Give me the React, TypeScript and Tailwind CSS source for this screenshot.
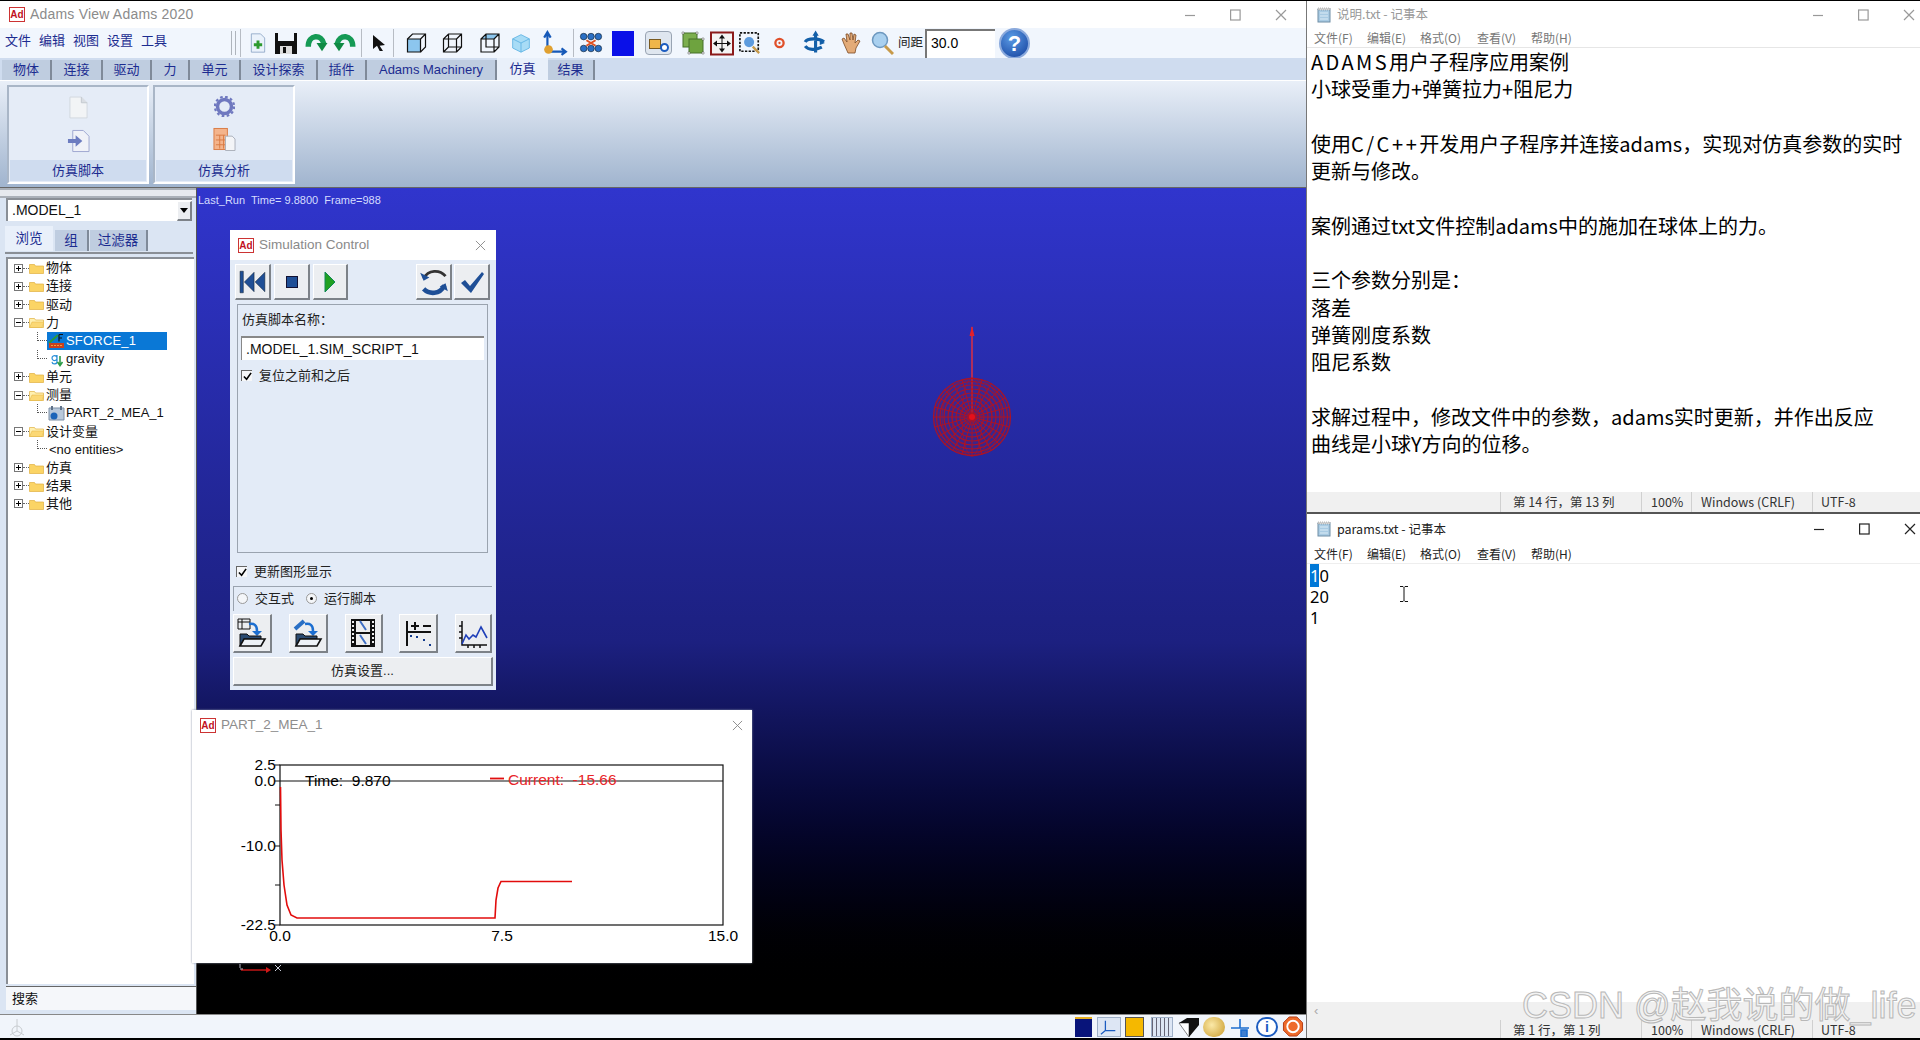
import type { ReactNode } from 'react'

const UI = "font-['Liberation_Sans','Noto_Sans_CJK_SC',sans-serif]"
const PAD = "font-['Noto_Sans_CJK_SC','Noto_Sans',sans-serif]"
const BEVEL = 'border-t border-l border-t-white border-l-white border-r-2 border-b-2 border-r-[#7d8288] border-b-[#7d8288] bg-[#eceef1] flex items-center justify-center'

const tabs = [
  { label: '物体', w: 'w-[50px]' },
  { label: '连接', w: 'w-[51px]' },
  { label: '驱动', w: 'w-[49px]' },
  { label: '力', w: 'w-[38px]' },
  { label: '单元', w: 'w-[51px]' },
  { label: '设计探索', w: 'w-[77px]' },
  { label: '插件', w: 'w-[49px]' },
  { label: 'Adams Machinery', w: 'w-[130px]' },
  { label: '仿真', w: 'w-[51px]', active: true },
  { label: '结果', w: 'w-[47px]' },
]

const tree = [
  { label: '物体', kind: 'plus' },
  { label: '连接', kind: 'plus' },
  { label: '驱动', kind: 'plus' },
  { label: '力', kind: 'minus' },
  { label: 'SFORCE_1', kind: 'force' },
  { label: 'gravity', kind: 'gravity' },
  { label: '单元', kind: 'plus' },
  { label: '测量', kind: 'minus' },
  { label: 'PART_2_MEA_1', kind: 'measure' },
  { label: '设计变量', kind: 'minus' },
  { label: '<no entities>', kind: 'none' },
  { label: '仿真', kind: 'plus' },
  { label: '结果', kind: 'plus' },
  { label: '其他', kind: 'plus' },
]

const notes: ReactNode[] = [
  <><span className="tracking-[2.4px]">ADAMS</span>用户子程序应用案例</>,
  '小球受重力+弹簧拉力+阻尼力',
  '',
  <>使用<span className="tracking-[2.6px]">C/C++</span>开发用户子程序并连接adams，实现对仿真参数的实时</>,
  '更新与修改。',
  '',
  '案例通过txt文件控制adams中的施加在球体上的力。',
  '',
  '三个参数分别是：',
  '落差',
  '弹簧刚度系数',
  '阻尼系数',
  '',
  '求解过程中，修改文件中的参数，adams实时更新，并作出反应',
  '曲线是小球Y方向的位移。',
]

function Ico({ className, children }: { className: string; children: ReactNode }) {
  return (
    <svg viewBox="0 0 24 24" className={`shrink-0 ${className}`}>
      {children}
    </svg>
  )
}

function AdLogo() {
  return (
    <span className="shrink-0 w-[16px] h-[15px] border border-[#c33] bg-white text-[#c1121f] text-[10px] leading-[13px] font-bold text-center">Ad</span>
  )
}

function WinControls({ dark }: { dark?: boolean }) {
  const c = dark ? '#222' : '#999'
  return (
    <svg viewBox="0 0 104 12" className="w-[104px] h-[12px]" fill="none" stroke={c} strokeWidth="1.2">
      <path d="M0 6.5h10" />
      <rect x="45.6" y="1" width="9.5" height="10" />
      <path d="M91 1l10 10M101 1L91 11" />
    </svg>
  )
}

function NoteIcon() {
  return (
    <svg viewBox="0 0 16 16" className="w-[16px] h-[16px] shrink-0">
      <rect x="2" y="2" width="12" height="13" fill="#a9cbe3" stroke="#6f8ea6" />
      <rect x="2" y="1" width="12" height="2" fill="#d8d8d8" stroke="#777" strokeWidth="0.5" strokeDasharray="1 1" />
      <path d="M4 6h8M4 9h8M4 12h8" stroke="#dcecf6" />
    </svg>
  )
}

function Folder({ open }: { open?: boolean }) {
  return (
    <svg viewBox="0 0 15 12" className="w-[15px] h-[12px] shrink-0">
      <path d="M0.5 2.5h5l1 1.5h8v7.5h-14z" fill={open ? '#fff0b0' : '#fbd465'} stroke="#e0b040" strokeWidth="0.7" />
      {open && <path d="M3 6h12l-2 5.5H0.5z" fill="#fbd875" stroke="#e0b040" strokeWidth="0.5" />}
    </svg>
  )
}

function TreeRow({ label, kind }: { label: string; kind: string }) {
  if (kind === 'plus' || kind === 'minus') {
    return (
      <div className="relative flex items-center h-[18.15px] pl-[6px] text-[13px] text-[#111]">
        <span className="relative w-[9px] h-[9px] border border-[#777] bg-white shrink-0">
          <span className="absolute left-[1px] top-[3px] w-[5px] h-px bg-black" />
          {kind === 'plus' && <span className="absolute left-[3px] top-[1px] w-px h-[5px] bg-black" />}
        </span>
        <span className="w-[6px] border-t border-dotted border-[#666]" />
        <Folder open={kind === 'minus'} />
        <span className="ml-[2px]">{label}</span>
      </div>
    )
  }
  return (
    <div className="flex items-center h-[18.15px] pl-[29px] text-[13px] text-[#111]">
      <span className="w-[10px] h-[9px] mb-[9px] border-l border-b border-dotted border-[#555] shrink-0" />
      {kind === 'force' && (
        <div className="flex items-center w-[120px] h-[18px] bg-[#0a78d6] text-white">
          <svg viewBox="0 0 17 16" className="w-[17px] h-[16px] shrink-0 ml-px">
            <path d="M1 10L10 2" stroke="#2a9a3c" strokeWidth="2" />
            <rect x="1" y="10" width="15" height="5" fill="#c9401e" />
            <path d="M3 12.5h11" stroke="#f2a23a" strokeDasharray="2 1" />
            <path d="M11 1.5h4M11 1.5v7M11 5h3" stroke="#111" strokeWidth="1.2" fill="none" />
          </svg>
          <span className="ml-px tracking-[0.2px]">{label}</span>
        </div>
      )}
      {kind === 'gravity' && (
        <>
          <svg viewBox="0 0 17 16" className="w-[17px] h-[16px] shrink-0 ml-px">
            <path d="M9 7a2.5 2.5 0 1 0 0 .1M9 4v6a2.5 2.5 0 0 1-5 .8" stroke="#2a8fd8" strokeWidth="1.2" fill="none" />
            <path d="M12 5v9M9.5 11l2.5 3.5 2.5-3.5" stroke="#2d9c48" strokeWidth="1.6" fill="none" />
          </svg>
          <span className="ml-px">{label}</span>
        </>
      )}
      {kind === 'measure' && (
        <>
          <svg viewBox="0 0 17 16" className="w-[17px] h-[16px] shrink-0 ml-px">
            <path d="M1 3h15v12H1z" fill="#b8c8da" stroke="#7c8fa6" />
            <path d="M4 1v4M13 1v4" stroke="#5e7188" strokeWidth="2" />
            <circle cx="6" cy="11" r="3.5" fill="#1c64b8" />
          </svg>
          <span className="ml-px">{label}</span>
        </>
      )}
      {kind === 'none' && <span className="ml-[2px]">{label}</span>}
    </div>
  )
}

function Toolbar() {
  return (
    <div className="flex items-center h-[30px] bg-[#f1f6fd] shrink-0">
      <div className="flex gap-[8px] pl-[5px] pb-[4px] text-[13px] text-[#1c2c90]">
        {['文件', '编辑', '视图', '设置', '工具'].map((m) => (
          <span key={m} className="w-[26px]">{m}</span>
        ))}
      </div>
      <span className="ml-[64px] w-[5px] h-[24px] border-x border-[#aeb4bc]" />
      <span className="ml-[4px] w-px h-[28px] bg-[#b7bcc4]" />
      <Ico className="ml-[7px] w-[20px] h-[24px]">
        <path d="M4 1h11l5 5v17H4z" fill="#eaf2fb" stroke="#8aa4c4" />
        <path d="M12 9v10M7 14h10" stroke="#2c9a2e" strokeWidth="3.5" />
      </Ico>
      <Ico className="ml-[6px] w-[24px] h-[24px]">
        <path d="M1 2h3v8h16V2h3v21H1z" fill="#111" />
        <rect x="6" y="15" width="12" height="8" fill="#ddd" />
        <rect x="9" y="16" width="3" height="6" fill="#111" />
      </Ico>
      <Ico className="ml-[6px] w-[25px] h-[22px]">
        <path d="M3 16C3 2 18 2 20 13" fill="none" stroke="#159a55" strokeWidth="6" />
        <path d="M12 12h12l-6 9z" fill="#0f8a44" />
      </Ico>
      <Ico className="ml-[3px] w-[25px] h-[22px]">
        <path d="M21 16C21 2 6 2 4 13" fill="none" stroke="#159a55" strokeWidth="6" />
        <path d="M0 12h12l-6 9z" fill="#0f8a44" />
      </Ico>
      <span className="ml-[4px] w-px h-[28px] bg-[#b7bcc4]" />
      <Ico className="ml-[9px] w-[16px] h-[26px]">
        <path d="M3 0l18 15-8 1 5 8-5 0-4-8-6 5z" fill="#111" />
      </Ico>
      <span className="ml-[6px] w-px h-[28px] bg-[#b7bcc4]" />
      <Ico className="ml-[11px] w-[25px] h-[24px]">
        <path d="M2 8h13v13H2z" fill="#8cc6ee" stroke="#111" strokeWidth="1.2" />
        <path d="M2 8l5-5h13v13l-5 5M15 8l5-5" fill="none" stroke="#111" strokeWidth="1.2" />
      </Ico>
      <Ico className="ml-[11px] w-[25px] h-[24px]">
        <path d="M2 8h13v13H2zM2 8l5-5h13v13l-5 5M15 8l5-5M7 3v13h13M7 16l-5 5" fill="none" stroke="#111" strokeWidth="1.2" />
      </Ico>
      <Ico className="ml-[13px] w-[24px] h-[24px]">
        <path d="M2 8l5-5h13l-5 5z" fill="#8cc6ee" />
        <path d="M2 8h13v13H2zM2 8l5-5h13v13l-5 5M15 8l5-5M7 3v13h13" fill="none" stroke="#111" strokeWidth="1.2" />
      </Ico>
      <Ico className="ml-[8px] w-[20px] h-[24px]">
        <path d="M12 2l10 5v11l-10 5-10-5V7z" fill="#a8dcf6" stroke="#5bb1e2" />
        <path d="M2 7l10 5 10-5M12 12v11" fill="none" stroke="#5bb1e2" />
      </Ico>
      <Ico className="ml-[11px] w-[26px] h-[28px]">
        <path d="M5 18V3M2 7l3-5 3 5M5 20h17M18 17l4 3-4 3" fill="none" stroke="#1659b8" strokeWidth="2" />
        <circle cx="6" cy="18" r="4" fill="#e0a030" />
      </Ico>
      <span className="ml-[5px] w-px h-[28px] bg-[#b7bcc4]" />
      <Ico className="ml-[5px] w-[24px] h-[22px]">
        {[4, 12, 20].map((x) => [5, 18].map((y) => <circle key={`${x}-${y}`} cx={x} cy={y} r="3.6" fill="#2a6fc4" stroke="#123" strokeWidth="0.7" />))}
        <path d="M7 9l10 6M17 9L7 15" stroke="#e05020" strokeWidth="2.2" />
      </Ico>
      <span className="ml-[9px] w-[22px] h-[25px] bg-[#0a10e8] shrink-0" />
      <span className="ml-[11px] relative w-[27px] h-[24px] shrink-0 rounded-sm border border-[#99a4b3] bg-[#dfe6ef]">
        <span className="absolute left-[3px] top-[7px] w-[12px] h-[10px] bg-[#f0b64a] border border-[#7a5a20]" />
        <span className="absolute right-[2px] bottom-[2px] w-[9px] h-[9px] rounded-full border-2 border-[#1c5cc0] bg-white" />
      </span>
      <Ico className="ml-[9px] w-[24px] h-[26px]">
        <rect x="2" y="2" width="14" height="14" fill="#7cae4e" stroke="#47712a" />
        <rect x="8" y="8" width="14" height="14" fill="#6ea33f" stroke="#47712a" />
        <path d="M1 1h2v2H1zM15 1h2v2h-2zM21 7h2v2h-2zM21 21h2v2h-2zM7 21h2v2H7z" fill="#fff" stroke="#555" strokeWidth="0.5" />
      </Ico>
      <Ico className="ml-[5px] w-[24px] h-[25px]">
        <rect x="1" y="1" width="22" height="22" fill="#f4f4f4" stroke="#8b1a1a" strokeWidth="2" />
        <path d="M12 3l3 4H9zM12 21l3-4H9zM3 12l4-3v6zM21 12l-4-3v6z" fill="#111" />
        <path d="M12 6v12M6 12h12" stroke="#111" />
      </Ico>
      <Ico className="ml-[5px] w-[22px] h-[26px]">
        <rect x="1" y="1" width="20" height="20" fill="none" stroke="#111" strokeWidth="1.8" strokeDasharray="2.5 1.5" />
        <circle cx="11" cy="11" r="5.5" fill="#5d9bdd" />
        <path d="M15 16l7 7" stroke="#c79a4a" strokeWidth="2.5" />
      </Ico>
      <Ico className="ml-[13px] w-[11px] h-[12px]">
        <circle cx="12" cy="12" r="9" fill="none" stroke="#e0502a" strokeWidth="5" />
        <circle cx="12" cy="12" r="2.5" fill="#e0502a" />
      </Ico>
      <Ico className="ml-[16px] w-[25px] h-[28px]">
        <path d="M14 3v18M4 11c2-4 14-4 18 0M4 15c3 4 10 4 16 1" fill="none" stroke="#135fa8" strokeWidth="3" />
        <path d="M14 0l3 5h-6zM23 12l-5-3v5z" fill="#135fa8" />
      </Ico>
      <Ico className="ml-[14px] w-[24px] h-[26px]">
        <path d="M4 13l-2-5 2-1 3 4-1-8h2l2 6V2h2l1 7 1-6 2 1-1 8 3-3 2 1-4 7-1 5H8z" fill="#e3ab78" stroke="#7b4a24" strokeWidth="0.8" />
      </Ico>
      <Ico className="ml-[6px] w-[24px] h-[26px]">
        <circle cx="10" cy="9" r="7.5" fill="#a9d0ef" stroke="#6d98bf" strokeWidth="1.5" />
        <path d="M15 15l8 8" stroke="#c79a4a" strokeWidth="3" />
      </Ico>
      <span className={`ml-[4px] w-[26px] text-[12.5px] text-[#222] ${UI}`}>间距</span>
      <span className={`ml-[1px] w-[70px] h-[29px] bg-white border-t-2 border-l-2 border-[#777] pl-[4px] text-[14px] leading-[24px] text-black ${UI}`}>30.0</span>
      <span className="ml-[4px] w-[31px] h-[31px] rounded-full bg-[radial-gradient(circle_at_40%_30%,#5b9be5,#123f9c)] border-2 border-[#8aa9dc] text-white text-[22px] font-bold leading-[27px] text-center shrink-0">?</span>
    </div>
  )
}

function RibbonGroup({ label, children }: { label: string; children: ReactNode }) {
  return (
    <div className="flex flex-col w-[142px] h-[99px] border-2 border-t-[#a9b6c7] border-l-[#a9b6c7] border-r-white border-b-white bg-[#e5ecf7] p-[1px]">
      <div className="flex-1 flex flex-col items-center gap-[10px] pt-[8px]">{children}</div>
      <div className="h-[21px] bg-[#cfdcef] text-center text-[13px] leading-[21px] text-[#1c2c90]">{label}</div>
    </div>
  )
}

function SimWindow() {
  return (
    <div className={`absolute left-[230px] top-[230px] w-[266px] h-[460px] flex flex-col bg-[#e3ebf7] ${UI}`}>
      <div className="flex items-center h-[30px] bg-white shrink-0 pl-[8px] pr-[10px]">
        <AdLogo />
        <span className="ml-[5px] text-[13.5px] text-[#8a8a8a]">Simulation Control</span>
        <svg viewBox="0 0 12 12" className="w-[11px] h-[11px] ml-auto" stroke="#888" fill="none">
          <path d="M1 1l10 10M11 1L1 11" />
        </svg>
      </div>
      <div className="flex h-[36px] mt-[4px] pl-[5px] shrink-0">
        <div className={`w-[36px] ${BEVEL}`}>
          <svg viewBox="0 0 26 22" className="w-[28px] h-[26px]"><path d="M1 1h3v20H1zM14 2v18L5 11zM24 2v18l-9-9z" fill="#1f4f96" stroke="#123" strokeWidth="0.5" /></svg>
        </div>
        <div className={`ml-[3px] w-[36px] ${BEVEL}`}><span className="w-[12px] h-[12px] bg-[#1f4f96] border border-[#113]" /></div>
        <div className={`ml-[3px] w-[35px] ${BEVEL}`}>
          <svg viewBox="0 0 12 22" className="w-[12px] h-[22px]"><path d="M1 1l10 10L1 21z" fill="#21a021" stroke="#185" /></svg>
        </div>
        <div className={`ml-[68px] w-[36px] ${BEVEL}`}>
          <svg viewBox="0 0 26 26" className="w-[30px] h-[30px]" fill="none">
            <path d="M4 10C8 2 18 2 23 8" stroke="#333" strokeWidth="2.4" />
            <path d="M22 16c-4 8-13 8-18 3" stroke="#1f4f96" strokeWidth="4" />
            <path d="M1 5l3 7 5-3zM25 21l-2-7-5 3z" fill="#1f4f96" />
          </svg>
        </div>
        <div className={`ml-[2px] w-[36px] ${BEVEL}`}>
          <svg viewBox="0 0 26 24" className="w-[26px] h-[24px]"><path d="M2 13l4-3 5 6L23 2l2 2-13 19z" fill="#1f4f96" /></svg>
        </div>
      </div>
      <div className="flex flex-col h-[249px] ml-[7px] mr-[8px] mt-[4px] border border-[#9aa3af] shrink-0">
        <div className="pl-[4px] pt-[7px] text-[13px] leading-[16px] text-[#222]">仿真脚本名称：</div>
        <div className="mx-[3px] mt-[8px] h-[24px] bg-white border-t-2 border-l border-[#888] pl-[4px] text-[14px] leading-[22px] text-[#111]">.MODEL_1.SIM_SCRIPT_1</div>
        <div className="flex items-center mt-[6px] pl-[3px] text-[13px] text-[#222]">
          <Check />
          <span className="ml-[7px]">复位之前和之后</span>
        </div>
      </div>
      <div className="flex items-center pl-[6px] mt-[9px] text-[13px] text-[#222]">
        <Check />
        <span className="ml-[7px]">更新图形显示</span>
      </div>
      <div className="flex items-center h-[25px] ml-[3px] mr-[4px] mt-[4px] border-t border-l border-[#9aa3af] pl-[3px] text-[13px] text-[#222] shrink-0">
        <span className="w-[11px] h-[11px] rounded-full bg-[#f4f6f9] border border-[#999]" />
        <span className="ml-[7px]">交互式</span>
        <span className="ml-[12px] w-[11px] h-[11px] rounded-full bg-[#f4f6f9] border border-[#999] flex items-center justify-center"><span className="w-[3px] h-[3px] rounded-full bg-black" /></span>
        <span className="ml-[7px]">运行脚本</span>
      </div>
      <div className="flex justify-between h-[39px] ml-[3px] mr-[4px] mt-[3px] shrink-0">
        <div className={`w-[39px] ${BEVEL}`}>
          <svg viewBox="0 0 30 30" className="w-[30px] h-[30px]">
            <path d="M1 1h12v10H1zM1 4h12M5 1v10" fill="none" stroke="#111" />
            <path d="M12 6c5-1 8 1 8 7" fill="none" stroke="#1c6ed0" strokeWidth="2.5" />
            <path d="M15 13h10l-5 5z" fill="#1c6ed0" />
            <path d="M3 16h7l2 2h12v3H7l-4 7z" fill="#2a4a70" stroke="#111" />
            <path d="M7 21h21l-4 7H3z" fill="#eef2f7" stroke="#111" strokeWidth="1.6" />
          </svg>
        </div>
        <div className={`w-[39px] ${BEVEL}`}>
          <svg viewBox="0 0 30 30" className="w-[30px] h-[30px]">
            <path d="M2 11L11 3" stroke="#2a6fc4" strokeWidth="4" />
            <path d="M12 6c5-1 8 1 8 7" fill="none" stroke="#1c6ed0" strokeWidth="2.5" />
            <path d="M15 13h10l-5 5z" fill="#1c6ed0" />
            <path d="M3 16h7l2 2h12v3H7l-4 7z" fill="#2a4a70" stroke="#111" />
            <path d="M7 21h21l-4 7H3z" fill="#eef2f7" stroke="#111" strokeWidth="1.6" />
          </svg>
        </div>
        <div className={`w-[38px] ${BEVEL}`}>
          <svg viewBox="0 0 26 30" className="w-[26px] h-[30px]">
            <path d="M1 1h24v28H1z" fill="#111" />
            <path d="M3 3v24M23 3v24" stroke="#eee" strokeWidth="2" strokeDasharray="2 2" />
            <rect x="6" y="3" width="14" height="11" fill="#eee" />
            <rect x="6" y="16" width="14" height="11" fill="#eee" />
            <path d="M10 17l6 9M10 3l6 9" stroke="#3f6fc4" strokeWidth="2" />
          </svg>
        </div>
        <div className={`w-[39px] ${BEVEL}`}>
          <svg viewBox="0 0 30 30" className="w-[30px] h-[30px]" stroke="#111" fill="none">
            <path d="M4 3v25M4 14h24" strokeWidth="2" />
            <path d="M8 8h8M12 4v8M20 8h8" strokeWidth="2" />
            <path d="M7 18h2M13 19h2M20 22h2M26 27h2" stroke="#123a8c" strokeWidth="2" />
          </svg>
        </div>
        <div className={`w-[37px] ${BEVEL}`}>
          <svg viewBox="0 0 30 30" className="w-[30px] h-[30px]" fill="none">
            <path d="M4 3v24h25M1 8h3M1 14h3M1 20h3M10 27v3M16 27v3M22 27v3" stroke="#111" strokeWidth="1.5" />
            <path d="M4 26l4-9 3 4 4-4 3 2 5-10 6 11" stroke="#1f3fb8" strokeWidth="1.6" />
          </svg>
        </div>
      </div>
      <div className={`h-[29px] ml-[3px] mr-[3px] mt-[4px] shrink-0 text-[13px] text-[#222] ${BEVEL}`}>仿真设置...</div>
    </div>
  )
}

function Check() {
  return (
    <span className="flex items-center justify-center w-[11px] h-[11px] bg-[#f6f7f9] border-t border-l border-[#666] shrink-0">
      <svg viewBox="0 0 10 10" className="w-[9px] h-[9px]"><path d="M1 5l3 3 5-7" stroke="#000" strokeWidth="1.8" fill="none" /></svg>
    </span>
  )
}

function PlotWindow() {
  const txt = { fontFamily: 'Liberation Sans', fontSize: 15.5 }
  return (
    <div className="absolute left-[192px] top-[710px] w-[560px] h-[253px] flex flex-col bg-white shadow-[0_0_2px_#8a94a8]">
      <div className={`flex items-center h-[39px] shrink-0 pl-[8px] pr-[9px] pb-[9px] ${UI}`}>
        <AdLogo />
        <span className="ml-[5px] text-[13.5px] text-[#8d8d8d]">PART_2_MEA_1</span>
        <svg viewBox="0 0 12 12" className="w-[11px] h-[11px] ml-auto" stroke="#888" fill="none">
          <path d="M1 1l10 10M11 1L1 11" />
        </svg>
      </div>
      <svg viewBox="192 749 560 214" className="w-[560px] h-[214px]">
        <rect x="280" y="765" width="443" height="160" fill="none" stroke="#111" strokeWidth="1.2" />
        <path d="M280 781h443" stroke="#111" strokeWidth="1.2" />
        <path d="M275 805h5M275 846h5M275 885h5M275 765h5M275 781h5M275 925h5" stroke="#111" />
        <text x="276" y="770" textAnchor="end" style={txt}>2.5</text>
        <text x="276" y="786" textAnchor="end" style={txt}>0.0</text>
        <text x="276" y="851" textAnchor="end" style={txt}>-10.0</text>
        <text x="276" y="930" textAnchor="end" style={txt}>-22.5</text>
        <text x="280" y="941" textAnchor="middle" style={txt}>0.0</text>
        <text x="502" y="941" textAnchor="middle" style={txt}>7.5</text>
        <text x="723" y="941" textAnchor="middle" style={txt}>15.0</text>
        <text x="305" y="786" style={txt} xmlSpace="preserve">Time:  9.870</text>
        <text x="508" y="785" style={{ ...txt, fill: '#e8262a' }} xmlSpace="preserve">Current:  -15.66</text>
        <path d="M490 778.5h14" stroke="#e01010" strokeWidth="1.8" />
        <path d="M280.5 787L281 830L282 860L284 885L287 905L291 915L297 918L495 918L496 900L498 888L501 881.5L572 881.5" fill="none" stroke="#e20c0c" strokeWidth="1.6" />
      </svg>
    </div>
  )
}

function Ball() {
  const rings = [4, 8, 12, 16, 20, 24, 28, 32, 35.5, 38.5]
  const spokes = Array.from({ length: 24 }, (_, i) => (i * Math.PI) / 12)
  const lats = [10, 20, 30]
  return (
    <svg viewBox="0 0 100 110" className="absolute left-[725px] top-[138px] w-[100px] h-[110px] overflow-visible" fill="none">
      <path d="M50 1v90" stroke="#e8303a" strokeWidth="1.4" />
      <path d="M50 0l-2.5 10h5z" fill="#e5202a" />
      <circle cx="50" cy="91" r="39" fill="#7a1a4a" fillOpacity="0.25" />
      {rings.map((r) => <circle key={r} cx="50" cy="91" r={r} stroke="#b3121f" strokeWidth="1.2" strokeOpacity="0.9" />)}
      {spokes.map((a) => (
        <path key={a} d={`M50 91L${50 + 39 * Math.cos(a)} ${91 + 39 * Math.sin(a)}`} stroke="#b3121f" strokeWidth="1" strokeOpacity="0.9" />
      ))}
      {lats.map((r) => (
        <ellipse key={r} cx="50" cy="91" rx={r} ry="39" stroke="#b3121f" strokeWidth="0.7" strokeOpacity="0.8" />
      ))}
      <circle cx="50" cy="91" r="3" fill="#e5101a" />
    </svg>
  )
}

function StatusPane({ pos }: { pos: string }) {
  return (
    <div className={`flex items-center h-[20px] bg-[#f0f0f0] text-[12.5px] text-[#333] shrink-0 ${PAD}`}>
      <span className="ml-[193px] w-[141px] h-full border-l border-[#d0d0d0] pl-[12px] leading-[20px]">{pos}</span>
      <span className="w-[50px] h-full border-l border-[#d0d0d0] pl-[9px] leading-[20px]">100%</span>
      <span className="w-[121px] h-full border-l border-[#d0d0d0] pl-[9px] leading-[20px]">Windows (CRLF)</span>
      <span className="flex-1 h-full border-l border-[#d0d0d0] pl-[8px] leading-[20px]">UTF-8</span>
    </div>
  )
}

function NotepadMenu({ dark }: { dark?: boolean }) {
  return (
    <div className={`flex h-[19px] pl-[7px] text-[12px] leading-[19px] shrink-0 ${dark ? 'text-[#222]' : 'text-[#777]'} ${PAD}`}>
      {['文件(F)', '编辑(E)', '格式(O)', '查看(V)', '帮助(H)'].map((m, i) => (
        <span key={m} className={['w-[53px]', 'w-[53px]', 'w-[57px]', 'w-[54px]', 'w-[54px]'][i]}>{m}</span>
      ))}
    </div>
  )
}

export default function App() {
  return (
    <div className={`relative w-[1920px] h-[1040px] overflow-hidden bg-black flex pt-px ${UI}`}>
      {/* Adams main window */}
      <div className="w-[1307px] mb-[2px] flex flex-col bg-white shrink-0 border-r border-[#777]">
        <div className="flex items-center h-[27px] pl-[9px] pr-[17px] shrink-0">
          <AdLogo />
          <span className="ml-[5px] text-[14px] text-[#8b8b8b] tracking-[0.2px]">Adams View Adams 2020</span>
          <div className="ml-auto"><WinControls /></div>
        </div>
        <Toolbar />
        <div className="flex items-end h-[22px] pl-[2px] bg-[#cfdcef] shrink-0">
          {tabs.map((t) => (
            <span
              key={t.label}
              className={`${t.w} text-center text-[13px] text-[#1c2c90] ${t.active ? 'h-[22px] leading-[22px] bg-[#e9f0fa]' : 'h-[20px] leading-[20px] bg-[#bfcde0] border-r-2 border-[#7f8a99]'}`}
            >
              {t.label}
            </span>
          ))}
        </div>
        <div className="flex gap-[4px] h-[108px] pt-[4px] pl-[7px] bg-gradient-to-b from-[#e9eff8] to-[#a0b4ce] border-b border-[#666] border-t border-t-white shrink-0">
          <RibbonGroup label="仿真脚本">
            <svg viewBox="0 0 20 24" className="w-[19px] h-[23px]"><path d="M1 1h12l6 6v16H1z" fill="#f2f4f6" stroke="#d2d7de" /><path d="M13 1v6h6" fill="#d9dde3" stroke="#c3c9d0" /></svg>
            <svg viewBox="0 0 24 24" className="w-[23px] h-[24px]"><path d="M6 1h11l6 6v16H6z" fill="#f0f2f8" stroke="#9ea6d0" /><path d="M1 10h8V6l7 6-7 6v-4H1z" fill="#6c7cc0" /></svg>
          </RibbonGroup>
          <RibbonGroup label="仿真分析">
            <svg viewBox="0 0 24 24" className="w-[21px] h-[21px]"><circle cx="12" cy="12" r="8" fill="none" stroke="#6f78bf" strokeWidth="4" /><circle cx="12" cy="12" r="11" fill="none" stroke="#6f78bf" strokeWidth="2.5" strokeDasharray="3 2.8" /></svg>
            <svg viewBox="0 0 24 24" className="w-[23px] h-[24px]"><rect x="1" y="1" width="14" height="22" fill="#f4b48c" stroke="#d97b45" /><path d="M3 8h10M3 13h10M3 18h10M7 8v14M11 8v14" stroke="#d97b45" /><path d="M13 9h7l3 3v12H13z" fill="#f3f4f7" stroke="#aab0ba" /></svg>
          </RibbonGroup>
        </div>
        <div className="flex flex-1 min-h-0">
          {/* Left browser panel */}
          <div className="w-[197px] flex flex-col bg-[#dbe5f3] shrink-0 border-r border-[#555]">
            <div className="h-[10px] border-y-2 border-[#aab0b8] bg-[#e6e9ee] shrink-0" />
            <div className="flex items-center h-[23px] mx-[6px] bg-white border-t-2 border-l-2 border-[#8a8f96] pl-[4px] text-[14px] text-[#111] shrink-0 w-[186px]">
              .MODEL_1
              <span className={`ml-auto w-[15px] h-[20px] flex items-center justify-center ${BEVEL}`}>
                <span className="w-0 h-0 border-x-[4px] border-x-transparent border-t-[5px] border-t-black" />
              </span>
            </div>
            <div className="flex items-end h-[25px] mt-[5px] ml-[5px] text-[13.5px] text-[#1c2c90] shrink-0">
              <span className="w-[48px] h-[25px] bg-[#e9f0fa] text-center leading-[25px]">浏览</span>
              <span className="ml-[2px] w-[34px] h-[21px] bg-[#bfcde0] border-r-2 border-[#7f8a99] text-center leading-[21px]">组</span>
              <span className="ml-[1px] w-[58px] h-[21px] bg-[#bfcde0] border-r-2 border-[#7f8a99] text-center leading-[21px]">过滤器</span>
            </div>
            <div className="h-[2px] ml-[5px] mr-[3px] mt-px bg-[#8a8f96] shrink-0" />
            <div className="flex-1 mt-[3px] ml-[6px] mr-[2px] bg-white border-l-2 border-t-2 border-[#8a8f96]">
              {tree.map((n) => <TreeRow key={n.label} label={n.label} kind={n.kind} />)}
            </div>
            <div className="h-[24px] mt-[2px] mb-[4px] ml-[6px] bg-[#f5f7fa] border-t border-[#666] pl-[6px] text-[13px] leading-[24px] text-[#111] shrink-0">搜索</div>
          </div>
          {/* Viewport */}
          <div className="relative flex-1 bg-gradient-to-b from-[#3035cd] via-[#1c2080] via-55% to-black to-[99%]">
            <div className="pt-[4px] pl-[1px] text-[11px] text-[#d5dcff] whitespace-pre">Last_Run  Time= 9.8800  Frame=988</div>
            <Ball />
            <svg viewBox="0 0 46 14" className="absolute left-[41px] top-[773px] w-[46px] h-[14px]">
              <path d="M3 9h26" stroke="#d01818" strokeWidth="1.4" />
              <path d="M28 6l5 3-5 3z" fill="#d01818" />
              <path d="M2 3v4M2 8h3" stroke="#ccd" strokeWidth="0.9" />
              <path d="M37 4l6 6M43 4l-6 6" stroke="#c8ccd8" />
            </svg>
          </div>
        </div>
        {/* Bottom status icons */}
        <div className="flex items-center h-[24px] bg-[#f1f5fb] border-t border-[#888] shrink-0">
          <svg viewBox="0 0 20 20" className="ml-[7px] w-[20px] h-[20px]" fill="none" stroke="#c8ccd0"><path d="M10 2v12M10 14l7 4M10 14l-7 4" /><circle cx="10" cy="14" r="5" /></svg>
          <span className="ml-[1048px] w-[17px] h-[20px] bg-[#08147a] border-t-2 border-t-[#e8b020] shrink-0" />
          <svg viewBox="0 0 24 20" className="ml-[5px] w-[24px] h-[20px] bg-[#dde6f4] border border-[#9fb0c8] shrink-0" fill="none" stroke="#1c5cc0" strokeWidth="1.4"><path d="M8 3v11H19M8 14l-5 4" /></svg>
          <span className="ml-[4px] w-[19px] h-[20px] bg-[#f5b800] border border-[#555] shrink-0" />
          <span className="ml-[7px] w-[22px] h-[20px] bg-[#dde6f4] border border-[#9fb0c8] bg-[linear-gradient(90deg,#667_1px,transparent_1px)] bg-[length:4px_100%] shrink-0" />
          <svg viewBox="0 0 22 20" className="ml-[5px] w-[22px] h-[20px] shrink-0"><path d="M1 6l8-5h12v7L11 20V8z" fill="#111" /><path d="M1 6h10v14z" fill="#fff" stroke="#111" strokeWidth="0.5" /></svg>
          <span className="ml-[3px] w-[22px] h-[20px] rounded-full bg-[radial-gradient(circle_at_40%_40%,#fbe9a8,#c99a2a)] shrink-0" />
          <svg viewBox="0 0 23 20" className="ml-[4px] w-[23px] h-[20px] shrink-0" fill="none" stroke="#1c6ed0" strokeWidth="1.6"><path d="M11 2v9M11 11H2M11 11l9 0" /><rect x="12" y="13" width="6" height="7" fill="#3f7fd0" /></svg>
          <span className="ml-[4px] w-[22px] h-[20px] rounded-full border-2 border-[#1c5cc0] bg-white text-[#1c5cc0] text-[14px] font-bold leading-[16px] text-center shrink-0">i</span>
          <svg viewBox="0 0 22 22" className="ml-[4px] w-[22px] h-[21px] shrink-0"><path d="M7 1h8l6 6v8l-6 6H7l-6-6V7z" fill="#ee6a2a" stroke="#b23a14" /><circle cx="11" cy="11" r="6" fill="none" stroke="#fff" strokeWidth="2" /></svg>
        </div>
      </div>

      {/* Notepad windows */}
      <div className="flex-1 flex flex-col min-w-0">
        <div className="h-[513px] flex flex-col bg-white border-b-2 border-[#555] shrink-0">
          <div className={`flex items-center h-[27px] pl-[9px] pr-[3px] shrink-0 ${PAD}`}>
            <NoteIcon />
            <span className="ml-[5px] text-[12.5px] text-[#999]">说明.txt - 记事本</span>
            <div className="ml-auto"><WinControls /></div>
          </div>
          <NotepadMenu />
          <div className={`flex-1 border-t border-[#e6e6e6] pl-[4px] text-[20px] leading-[27.3px] text-black ${PAD}`}>
            {notes.map((line, i) => (
              <div key={i} className="h-[27.3px] whitespace-pre">{line}</div>
            ))}
          </div>
          <StatusPane pos="第 14 行，第 13 列" />
        </div>
        <div className="flex-1 flex flex-col bg-white min-h-0">
          <div className={`flex items-center h-[30px] pl-[9px] pr-[2px] shrink-0 ${PAD}`}>
            <NoteIcon />
            <span className="ml-[5px] text-[12.5px] text-[#222]">params.txt - 记事本</span>
            <div className="ml-auto"><WinControls dark /></div>
          </div>
          <NotepadMenu dark />
          <div className="relative flex-1 border-t border-[#eee] pl-[3px] pt-[1px] text-[16.5px] leading-[21px] text-black font-['Noto_Sans',sans-serif]">
            <div><span className="bg-[#0078d7] text-white">1</span>0</div>
            <div>20</div>
            <div>1</div>
            <svg viewBox="0 0 8 16" className="absolute left-[93px] top-[22px] w-[8px] h-[16px]" fill="none" stroke="#111">
              <path d="M0 .5h3l1 1 1-1h3M4 1.5v13M0 15.5h3l1-1 1 1h3" />
            </svg>
          </div>
          <div className="flex items-center h-[18px] bg-[#f0f0f0] pl-[7px] text-[#aaa] text-[13px] shrink-0">‹</div>
          <StatusPane pos="第 1 行，第 1 列" />
        </div>
      </div>

      <SimWindow />
      <PlotWindow />
      <span className="absolute left-[1522px] top-[991px] text-[36px] leading-[30px] text-[#f3f3f3] whitespace-nowrap font-['Liberation_Sans','Noto_Sans_CJK_SC',sans-serif] [-webkit-text-stroke:1px_#b8b8b8]">CSDN @赵我说的做_life</span>
      <div className="absolute left-[1307px] right-0 bottom-0 h-[2px] bg-black" />
    </div>
  )
}
